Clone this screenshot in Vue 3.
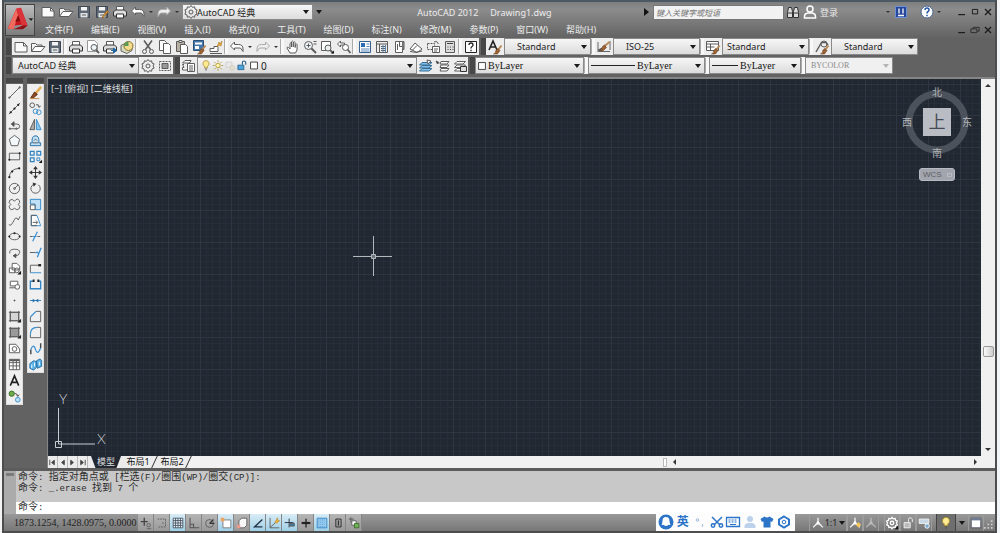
<script setup>
import { ref } from 'vue'

const brush = '<path d="M14.500 6.500l-4 5" stroke="#b98a5a" stroke-width="2"/><path d="M11 9.500l2 2-2.500 3.500H6.500q2.500-1 2.500-4z" fill="#9b6234" stroke="#6f4423" stroke-width=".6"/>'
const page = '<path d="M2 3.500h8.500l3.500 3.500v6H2z" fill="#fafafa"/><path d="M10.500 3.500V7H14"/>'
const disk = '<path d="M2.500 2.500h11v11h-11z" fill="#5d6874" stroke="#3f4852"/><path d="M5 3h6v3.500H5z" fill="#f4f4f4" stroke="none"/><path d="M4.500 9h7v4.500h-7z" fill="#dfe3e6" stroke="none"/><path d="M6 11h4"/>'
const printer = '<path d="M4.500 6V2.500h7V6" fill="#fff"/><path d="M3.500 6h9l2 2v4h-13V8z" fill="#ddd" stroke="#333"/><path d="M4.500 10h7v4h-7z" fill="#fff" stroke="#333"/>'
const person = '<circle cx="8" cy="5" r="3"/><path d="M2.500 14v-1.500q0-3 3.500-3.500h4q3.500.500 3.500 3.500V14z"/>'
const layers = '<path d="M5 3.500h8.500L11 6H2.500zM5 7h8.500L11 9.500H2.500zM5 10.500h8.500L11 13H2.500z" fill="#fff"/>'
const gear = '<path d="M8 1.500l1.400 1.800 2.200-.500.400 2.200 2.100.9-1 2.100 1 2.100-2.100.9-.4 2.200-2.200-.500L8 14.500l-1.400-1.800-2.200.5-.4-2.200-2.100-.9 1-2.100-1-2.100L4 5l.4-2.200 2.200.500z"/><circle cx="8" cy="8" r="2"/>'
const aMark = '<path d="M8 2v5L2.500 13M8 7l5.500 6M5 10.500q3-3 6 0" stroke="#f4f4f4" stroke-width="1.500"/><circle cx="8" cy="7.500" r="1.500" fill="#fff" stroke="none"/>'

const icons = {
  paper: page, disk, printer, gear, layers,
  open: '<path d="M1.500 12.500v-8h4l1.500 1.500h5v2" fill="#f3f3f3"/><path d="M1.500 12.500l3.500-5h10l-4 5z" fill="#fff"/>',
  saveas: disk + '<path d="M14.500 7.500l-5 6-1.500.5.500-1.500 4.500-6z" fill="#e39a3b" stroke="#7a4d18" stroke-width=".6"/>',
  undo: '<path d="M1.500 7l4-4v2.500h4q4.500 0 4.500 4.500v2.500l-2.500-3.500h-6V11z" fill="#fff"/>',
  redo: '<path d="M14.500 7l-4-4v2.500h-4Q2 5.500 2 10v2.500L4.500 9h6v2z" fill="#eee" stroke="#aaa"/>',
  preview: '<path d="M2.500 1.500h7l3 3v8h-10z" fill="#fff" stroke="#999"/><circle cx="9" cy="8.500" r="3" fill="#eef4f8"/><path d="M11 11l3 3" stroke-width="1.800"/>',
  publish: printer + '<path d="M9 11.500h4.500M11.500 9l3 2.500-3 2.500z" stroke="#1b66a5" fill="#1b66a5"/>',
  globe: '<path d="M2 6.500l6-3 5 2v6l-5 3-6-2.500z" fill="#d9dcc0" stroke="#666"/><circle cx="9.500" cy="7" r="4.500" fill="#f1dc8f" stroke="#8c7326"/><path d="M9.500 7V2.500A4.500 4.500 0 0 0 5 7z" fill="#5b9a55" stroke="none"/>',
  cut: '<path d="M4 1.500l6.500 9M12 1.500l-6.500 9" stroke-width="1.600"/><circle cx="4.500" cy="12.500" r="2"/><circle cx="11.500" cy="12.500" r="2"/>',
  copy: '<path d="M2.500 1.500h5l2 2v8h-7z" fill="#fff"/><path d="M6.500 4.500h5l2 2v8h-7z" fill="#fff"/>',
  paste: '<path d="M2.500 2.500h8v10h-8z" fill="#b9b0a4"/><path d="M5 1.500h3v2H5z" fill="#eee"/><path d="M6.500 5.500h5l2 2v7h-7z" fill="#fff"/>',
  match: '<path d="M2.500 1.500h10v10h-10z" fill="#4579ad" stroke="#2b4e73"/><path d="M4 3.500h7v2H4zM4 7h4v3H4z" fill="#fff" stroke="none"/>' + brush,
  block: '<path d="M2 12.500V9.500h4v-2h4v5zM2 14.500h12" fill="#fff"/><path d="M9 8l2-5 1 2 2-3-1 5-2-1z" fill="#f6b53b" stroke="#a3701d" stroke-width=".6"/>',
  hand: '<path d="M5 14L2 9q0-1.500 1.500-.5L5 10V4.500q1-1.500 1.500 0V8 2.800q1-1.500 1.700 0V8l.3-4.600q1-1.300 1.600 0V8.500l.6-3q1-1.200 1.400 0L12 11l-1.500 3z" fill="#fff"/>',
  zoom: '<circle cx="6.500" cy="6.500" r="4" fill="#eef4f8"/><path d="M9.500 9.500l4.500 4.500" stroke-width="2"/><path d="M4.500 6.500h4M6.500 4.500v4M11.500 2.500h3M11.500 5h3"/>',
  zoomwin: '<path d="M2.500 2.500h9v9h-9z" fill="#fff"/><circle cx="9" cy="9" r="3" fill="#e8f0f5"/><path d="M11 11l3 3" stroke-width="1.800"/><path d="M12 14.500h3v-3z" fill="#111" stroke="none"/>',
  zoomprev: '<path d="M1.500 5l3-3v2h4v2h-4v2z" fill="#fff"/><circle cx="9.500" cy="8.500" r="3" fill="#fff"/><path d="M11.500 10.500l3 3.500" stroke-width="1.800"/>',
  props: '<path d="M2.500 2.500h11v11h-11z" fill="#fff" stroke="#36618f"/><path d="M4 4h4v4H4z" fill="#2b6db0" stroke="none"/><path d="M9.500 5h3M9.500 7.500h3M4 10h8.500M4 12h8.500" stroke="#5688b8"/>',
  dcenter: '<path d="M2.500 2.500h11v11h-11zM2.500 5h11M5.500 5v8.500M7 7.500h5M7 9.500h5M7 11.500h5" fill="#eee"/><path d="M9 6v7M11.500 6v7" stroke="#5688b8"/>',
  palette: '<path d="M4.500 2.500h7v11h-7zM8.500 2.500v5h3M6.500 5v6" fill="#fff"/><path d="M11.500 2.500h1.500v8h-1.500" fill="#888"/>',
  sheets: '<path d="M2 10l5-6 7 6-5 3.500zM4 11.500l5-5M2 12.500q6 2 12-.500" fill="#fff"/>',
  markup: '<path d="M2.500 4.500h7v6h-7z" stroke-dasharray="2 1"/><path d="M7.500 7.500h7v6h-7zM9 10h4M9 12h3" fill="#fff"/><path d="M9 3q3-2 4.500 2"/>',
  calc: '<path d="M3.500 2.500h9v11h-9z" fill="#ddd"/><path d="M5 4.500h6M5.500 8h1M8 8h1M10.500 8h1M5.500 10.500h1M8 10.500h1M10.500 10.500h1" stroke="#444"/>',
  help: '<path d="M2.500 2.500h11v11h-11z" fill="#fff" stroke="#222"/><path d="M6 6q0-2 2-2t2 2q0 1-1 1.500T8 9.500M8 10.800v1.400" stroke="#222" stroke-width="1.300"/>',
  textstyle: '<path d="M2 11L6 2l4 9M3.500 8h5" stroke="#222" stroke-width="1.600"/>' + brush,
  dimstyle: '<path d="M2 3v10M14 2v9M2 12.500h12" stroke="#666"/><path d="M2 11l4-2v3z" fill="#666"/><path d="M13.500 3l-5 4" stroke="#b98a5a" stroke-width="2"/><path d="M8.500 6l2 2.500-3 3H3.500q3-1.500 3-4z" fill="#9b6234" stroke="#6f4423" stroke-width=".6"/>',
  tablestyle: '<path d="M1.500 2.500h12v9h-12zM1.500 5h12M5.500 5v6.500M1.500 8h8" fill="#fff"/>' + brush,
  mleader: '<path d="M2 13L7.500 3.500H12L14 6" stroke-width="1.400"/><circle cx="10" cy="5" r="3"/>' + brush,
  wssave: '<path d="M2.500 3.500h11v9h-11z" stroke-dasharray="2 1"/><path d="M5 5.500h6v5H5z" fill="#999"/>',
  layerprop: '<path d="M4 2.500h6L8.500 5H1.500zM3 6.500H1.500L3 9.500M3 9.500H1.500V12H6" fill="#fff"/><path d="M6.500 5.500h7v8h-7zM8 8h4M8 10h4M8 12h4" fill="#fff"/>',
  bulb: '<path d="M8 1.500a4 4 0 0 1 2 7.500v2H6V9a4 4 0 0 1 2-7.500z" fill="#ffeb94" stroke="#a58a2a"/><path d="M6.500 12.500h3M7 14h2" stroke="#555"/>',
  sun: '<circle cx="8" cy="8" r="3" fill="#fff6a8" stroke="#a58a2a"/><path d="M8 1v2.500M8 12.500V15M1 8h2.500M12.500 8H15M3 3l2 2M11 11l2 2M13 3l-2 2M5 11l-2 2" stroke="#a58a2a"/>',
  vpfreeze: '<path d="M2.500 3.500h8v7h-8z" fill="#e8e8e8" stroke="#ccc"/><circle cx="11" cy="11" r="3" fill="#e6e0cf" stroke="#c9c4b5"/>',
  unlock: '<path d="M2.500 7.500h8v6h-8z" fill="#4aa3df" stroke="#22597f"/><path d="M8.500 7V4q0-2 2-2t2.500 2v3" stroke="#22597f" stroke-width="1.400"/>',
  swatch: '<path d="M2.500 2.500h11v11h-11z" fill="#fff" stroke="#222" stroke-width="1.300"/>',
  lay1: '<path d="M4 4.500h10L11 7H1.500zM4 7.500h10L11 10H1.500zM4 10.500h10L11 13H1.500z" fill="#7fbce8" stroke="#3b6f94"/><path d="M9 2l4 1-3 3z" fill="#fff"/>',
  lay2: '<path d="M1 3l3 1.500L2.500 6z" fill="#333"/><path d="M6 3.500h8L12 6H5zM6 7h8l-2 2.500H5zM6 10.500h8L12 13H5z" fill="#fff"/>',
  lay3: layers + '<path d="M8.500 8.500h6v5h-6z" fill="#ddd" stroke="#333"/>',
  line: '<path d="M2.500 13.500L13.500 2.500"/><circle cx="2.500" cy="13.500" r=".8"/><circle cx="13.500" cy="2.500" r=".8"/>',
  xline: '<path d="M2 14L14 2"/><path d="M4 12h0M12 4h0M8 8h0" stroke="#222" stroke-width="2.400" stroke-linecap="round"/>',
  pline: '<path d="M2.500 12.500h8q3 0 3-2.500t-3-2.500H7"/><path d="M7.500 5L4.500 7.500l3 2.500z" fill="#444"/><circle cx="3" cy="12.500" r=".8"/><circle cx="10" cy="12.500" r=".8"/>',
  polygon: '<path d="M8 2.500l5.500 4.200-2 6.800h-7l-2-6.800z" fill="#f2f8fc"/>',
  rect: '<path d="M2.500 4.500h11v7h-11z"/><path d="M2.500 11.500h0M13.500 4.500h0" stroke="#222" stroke-width="2.200" stroke-linecap="round"/>',
  arc: '<path d="M2.500 13.500q0-9 10.500-10"/><path d="M2.500 13h0M5.500 7h0M13 3.500h0" stroke="#222" stroke-width="2.400" stroke-linecap="round"/>',
  circle: '<circle cx="8" cy="8" r="5.500"/><path d="M8 8l4-4" /><circle cx="8" cy="8" r="1"/>',
  cloud: '<path d="M8 4.500q3-4 5-1 1.500 2.500-1 4.500 3 2 1 4.500-2.500 2.500-5-.5-3 3-5 .5-2-3 1-4.500-3-2-1-4.500 2.500-2.500 5 1z"/>',
  spline: '<path d="M2 12.500q2 2 4-2t3-5q2-1 3 2l2-4"/>',
  ellipse: '<ellipse cx="8" cy="8" rx="5.500" ry="3.500"/><path d="M2.500 8h0M8 4.500h0M13.500 8h0" stroke="#222" stroke-width="2.200" stroke-linecap="round"/>',
  earc: '<path d="M3 9Q2 4.500 8 4.500T13.500 8 9 11.500"/><path d="M9.500 9.500l-3 2 3 2z" fill="#444"/>',
  insert: '<path d="M5.500 2.500h5l3 3v4h-8zM2.500 7.500h6v5h-6z" fill="#fff"/><circle cx="10.500" cy="10" r="2.500"/><path d="M11 14.500h4v-4z" fill="#111" stroke="none"/>',
  mkblock: '<path d="M3.500 4.500h8v5h-8zM2.500 11.500h6" fill="#fff"/><circle cx="11" cy="10.500" r="2.500" fill="#fff"/>',
  point: '<path d="M7.500 7.500h1v1h-1z" fill="#333"/>',
  hatch: '<path d="M3.500 3.500h9v9h-9z" fill="#d6d6d6"/><path d="M2 3.500h12M3.500 2v12M12.500 2v12M2 12.500h12"/><path d="M11 14.500h4v-4z" fill="#222" stroke="none"/>',
  gradient: '<path d="M3.500 3.500h9v9h-9z" fill="#999"/><path d="M2 3.500h12M3.500 2v12M12.500 2v12M2 12.500h12"/><path d="M11 14.500h4v-4z" fill="#222" stroke="none"/>',
  region: '<path d="M2.500 12.500v-9h7l4 5v4z" fill="#fff"/><circle cx="8" cy="8.500" r="2.500"/>',
  table: '<path d="M2.500 2.500h11v11h-11zM2.500 6h11M2.500 9.500h11M6.500 4v9.500M10 4v9.500" fill="#fff"/><path d="M3 3.500h10" stroke-width="2"/>',
  mtext: '<path d="M3.500 13.500L8 3l4.500 10.500M5 10h6" stroke="#222" stroke-width="1.700"/>',
  addsel: '<circle cx="5" cy="5" r="2.800" fill="#6dab4b" stroke="#3c6d26"/><circle cx="11.500" cy="11.500" r="2.500" fill="#bfe0f5" stroke="#3a8fd0"/><path d="M8 4.500q3 0 3.500 3M10 6l1.500 2 1.500-2"/>',
  erase: '<path d="M14 2L8 9" stroke="#e2ad4e" stroke-width="2.600"/><path d="M7 7.500l3 2.500-4 3.500H3z" fill="#8c4a22" stroke="#5c2f14"/><path d="M2 14.500h10" stroke="#c58a4a"/>',
  copyobj: '<circle cx="4.500" cy="4.500" r="2.500"/><path d="M8.500 4q3-1 3.500 2M10.500 5l1.500 2 1.500-2"/><circle cx="8" cy="11" r="2.500" stroke="#3a8fd0"/><circle cx="11.500" cy="12" r="2.500" stroke="#3a8fd0"/>',
  mirror: '<path d="M7 2.500v11H2z" fill="#aaa"/><path d="M9 2.500v11h5z" fill="#8cc6ec" stroke="#3a8fd0"/>',
  offset: '<path d="M2.500 13.500h11v-3h-2q1-8-4-7.500-4 .5-3 7.500h-2z" fill="#bfe0f5" stroke="#256fa8"/><path d="M5 10.500h6M6.500 8q1.500-3 3 0"/>',
  array: '<path d="M2.500 2.500h4v4h-4zM9.500 2.500h4v4h-4zM2.500 9.500h4v4h-4z" stroke="#2f84c4" stroke-width="1.300"/><path d="M9.500 9.500h3v3h-3z" stroke="#2f84c4"/><path d="M11.500 15H15v-3.500z" fill="#111" stroke="none"/>',
  move: '<path d="M8 3v10M3 8h10" stroke="#333"/><path d="M8 1l2.500 3.500h-5zM8 15l2.500-3.500h-5zM1 8l3.500-2.500v5zM15 8l-3.500-2.500v5z" fill="#333" stroke="none"/>',
  rotate: '<path d="M6 3.500a5 5 0 1 0 5 .5"/><path d="M5 1.500l4 1.500-3 3z" fill="#333" stroke="none"/>',
  scale: '<path d="M2.500 2.500h11v11h-6v-6h-5z" fill="#bfe0f5" stroke="#2f84c4"/><path d="M2.500 8.500h5v5h-5z" fill="#fff"/>',
  stretch: '<path d="M3.500 2.500h6l4 11h-10z" fill="#fff" stroke="#3a8fd0"/><path d="M9 2.500H3.500v11h6M5 10h5M8.500 8l2 2-2 2"/>',
  trim: '<path d="M2 8h4M10 8h4" stroke-dasharray="3 1"/><path d="M5 13l5-10M5 8h4" stroke="#3a8fd0" stroke-width="1.300"/>',
  extend: '<path d="M2 8h6"/><path d="M8 8h3M10 13l4-10" stroke="#3a8fd0" stroke-width="1.400"/>',
  breakpt: '<path d="M13.500 4.500h-11v8" /><path d="M2.500 12.500H14" stroke="#3a8fd0"/><path d="M11 4.500h3" stroke="#222" stroke-width="2.500"/>',
  breakobj: '<path d="M5.500 4.500h-3v8h11v-8h-3" stroke="#2f84c4" stroke-width="1.400"/><path d="M5 4h2M10 4h2" stroke="#222" stroke-width="2.500"/>',
  join: '<path d="M2 8h12" stroke="#2f84c4"/><path d="M5 6l3 2-3 2zM11 6L8 8l3 2z" fill="#256fa8" stroke="none"/>',
  chamfer: '<path d="M8.500 2.500h5v11h-11v-5"/><path d="M2.500 8.500l6-6" stroke="#3a8fd0" stroke-width="1.300"/>',
  fillet: '<path d="M9.500 2.500h4v11h-11v-3"/><path d="M2.500 10.500q0-8 7-8" stroke="#3a8fd0" stroke-width="1.300"/>',
  blend: '<path d="M3 14v-5M13.500 7.500v-5" stroke="#444" stroke-width="1.500"/><path d="M3 9q3-7 5 0t5.500-1.500" stroke="#3a8fd0" stroke-width="1.300"/>',
  explode: '<path d="M2 7l4-3 3 1v6l-3 3-4-2zM9 4l4-2 1.500 2v6L10 12z" fill="#58b0e4" stroke="#256fa8"/><path d="M4 8v4M7 6v4M12 5v4" stroke="#fff"/>',
  infer: '<path d="M6 2v9M2 6.500h8" stroke="#444" stroke-width="1.500"/><circle cx="11" cy="10.500" r="2"/><path d="M9 14.500h5" />',
  snap: '<path d="M3 3.500h9v9H3" stroke-dasharray="2 1"/><path d="M8 8h2"/>',
  grid: '<path d="M2.500 2.500h11v11h-11zM2.500 5.200h11M2.500 8h11M2.500 10.800h11M5.200 2.500v11M8 2.500v11M10.800 2.500v11" fill="#e4f2fb" stroke="#4b5560"/>',
  ortho: '<path d="M3.500 2v11.500H14M3.500 9.500h4v4" stroke="#555" stroke-width="1.200"/>',
  polar: '<circle cx="7.500" cy="8.500" r="4.500"/><path d="M7.500 8.500L12 4M7.500 8.500H13" stroke="#333" stroke-width="1.300"/>',
  osnap: '<path d="M4.500 4.500h9v9h-9z" fill="#fff" stroke="#777"/><path d="M2 2h4v4H2z" fill="#f0a35a" stroke="none"/>',
  osnap3: '<path d="M4.500 5.500l3-3h6v8l-3 3h-6z" fill="#f8f8f8"/><path d="M2 10h4v4H2z" fill="#e99a8a" stroke="none"/>',
  otrack: '<path d="M13 4L4 12.500h9" stroke="#234" stroke-width="1.500"/>',
  ducs: '<path d="M3.500 2v11.500H14M3.500 13.500l7-7" /><path d="M9 7l3-5 .5 3 2 .5-4 3z" fill="#f0b43a" stroke="#a3701d" stroke-width=".5"/>',
  dyn: '<path d="M7 3v10M2 7.500h10" stroke="#223"/><path d="M8 8.500h5v3H8z" fill="#3a7ca5"/>',
  lwt: '<path d="M8 3v10" stroke="#222" stroke-width="1.500"/><path d="M3 8h10" stroke="#222" stroke-width="2.500"/>',
  tpy: '<path d="M2.500 2.500h11v11h-11z" fill="#9bcdf0" stroke="#2f84c4"/><path d="M4 4.500h8M4 7h8M4 9.500h8M4 12h8" stroke="#4a94cc" stroke-dasharray="1 1"/>',
  qp: '<path d="M5.500 3.500h6v9h-6z" stroke="#222"/><path d="M8.500 5v6" stroke="#333" stroke-width="1.500"/>',
  sc: '<path d="M2 3.500h6M4.500 1.500v6" stroke="#555"/><path d="M5.500 5.500h5v5h-5z" fill="#fff"/><path d="M8.500 8.500h5v5h-5z" fill="#6fb35a" stroke="#3c6d26"/>',
  aMark,
  aVis: aMark + '<path d="M12 7l3 3-3 3-3-3z" fill="#f6c95a" stroke="none"/>',
  aAuto: '<g opacity=".45">' + aMark + '</g>',
  gearL: '<g stroke="#fff" stroke-width="1.500">' + gear + '</g><path d="M11 15h4v-4z" fill="#111" stroke="none"/>',
  lockL: '<path d="M3.500 7.500h7v6h-7z" fill="#bbb" stroke="#f4f4f4"/><path d="M8.500 7V4q0-2 2-2t2.500 2v3" stroke="#f4f4f4"/>',
  hw: '<path d="M2.500 3.500h11v5h-11z" fill="#c8d8e4" stroke="#f4f4f4"/><circle cx="11.500" cy="11.500" r="2.500" fill="#75a9cd" stroke="#fff"/>',
  clean: '<path d="M2.500 2.500h11v11h-11z" fill="#fff" stroke="#445"/><path d="M3 4h10" stroke="#667c96" stroke-width="2"/>',
  binoc: '<path d="M3.500 3.500h3l1 4v6h-5v-5zM12.500 3.500h-3l-1 4v6h5v-5z" fill="#ddd" stroke="#333"/><path d="M3 9h4M9 9h4" stroke="#333"/>',
  userL: '<g fill="#8a8a8a" stroke="#fff" stroke-width="1.500">' + person + '</g>',
  exch: '<path d="M2.500 2.500h11v11h-11z" fill="#26479a" stroke="#6f8fd4"/><path d="M6 4.500v5M10 4.500v5M5 11.500h6" stroke="#fff" stroke-width="1.300"/>',
  helpR: '<circle cx="8" cy="8" r="6" fill="#fff" stroke="#4c6a94"/><path d="M6 6q0-2 2-2t2 2q0 1-1 1.500T8 9.500M8 10.800v1.400" stroke="#2456a0" stroke-width="1.500"/>',
  min: '<path d="M3 11.500h9" stroke="#1c1c1c" stroke-width="1.600"/>',
  max: '<path d="M4.500 4.500h7v6h-7z" stroke="#1c1c1c" stroke-width="1.300"/>',
  restore: '<path d="M5.500 6V4.500h8v5H11M2.500 6.500h8v5h-8z" stroke="#1c1c1c"/>',
  close: '<path d="M4 4l8 8M12 4l-8 8" stroke="#1c1c1c" stroke-width="1.800"/>',
  imeLogo: '<circle cx="8" cy="8" r="7.500" fill="#2b74c8" stroke="none"/><path d="M8 3q3.500 0 3.500 4 0 2 1 3.500-1 .8-2 .3Q9 12 8 12t-2.500-1.200q-1 .5-2-.3 1-1.500 1-3.500 0-4 3.500-4z" fill="#fff" stroke="none"/>',
  imePunct: '<circle cx="5.500" cy="6" r="1.300" stroke="#9bb8d8"/><path d="M10 10l1 1-1 2" stroke="#9bb8d8"/>',
  imeCut: '<g stroke="#2b74c8" stroke-width="1.500"><path d="M3 3l8 8M13 3l-8 8"/><circle cx="4" cy="11.500" r="1.700"/><circle cx="12" cy="11.500" r="1.700"/></g>',
  imeKey: '<path d="M1.500 3.500h13v9h-13z" stroke="#2b74c8" stroke-width="1.300"/><path d="M3.500 6h9M3.500 8h9" stroke="#2b74c8" stroke-dasharray="2 1"/><path d="M5 10.500h6" stroke="#2b74c8"/>',
  imeUser: '<g fill="#bcd2ec" stroke="none">' + person + '</g>',
  imeShirt: '<path d="M5.500 2.500q2.500 2 5 0l4 2.500-1.500 3-1.500-.8v6.300h-7V7.200L3 8 1.500 5z" fill="#2b74c8" stroke="none"/>',
  imeGear: '<path d="M8 2.500l5 3v5l-5 3-5-3v-5z" stroke="#2b74c8" stroke-width="2"/><circle cx="8" cy="8" r="1.800" stroke="#2b74c8"/>',
}

const quick = ['paper', 'open', 'disk', 'saveas', 'printer', 'undo', '▾', 'redo', '▾']
const menus = ['文件(F)', '编辑(E)', '视图(V)', '插入(I)', '格式(O)', '工具(T)', '绘图(D)', '标注(N)', '修改(M)', '参数(P)', '窗口(W)', '帮助(H)']
const standard = ['paper', 'open', 'disk', '|', 'printer', 'preview', 'publish', 'globe', '|', 'cut', 'copy', 'paste', 'match', 'block', '|', 'undo', '▾', 'redo', '▾', '|', 'hand', 'zoom', 'zoomwin', 'zoomprev', '|', 'props', 'dcenter', 'palette', 'sheets', 'markup', 'calc', '|', 'help']
const styles = [
  { icon: 'textstyle', text: 'Standard', label: '文字样式', pad: 'wide' },
  { icon: 'dimstyle', text: 'ISO-25', label: '标注样式', pad: 'wide' },
  { icon: 'tablestyle', text: 'Standard', label: '表格样式', pad: '' },
  { icon: 'mleader', text: 'Standard', label: '多重引线样式', pad: 'wide' },
]
const draw = ['line', 'xline', 'pline', 'polygon', 'rect', 'arc', 'circle', 'cloud', 'spline', 'ellipse', 'earc', 'insert', 'mkblock', 'point', 'hatch', 'gradient', 'region', 'table', 'mtext', 'addsel']
const modify = ['erase', 'copyobj', 'mirror', 'offset', 'array', 'move', 'rotate', 'scale', 'stretch', 'trim', 'extend', 'breakpt', 'breakobj', 'join', 'chamfer', 'fillet', 'blend', 'explode']
const toggles = ['infer', 'snap', 'grid', 'ortho', 'polar', 'osnap', 'osnap3', 'otrack', 'ducs', 'dyn', 'lwt', 'tpy', 'qp', 'sc']
const active = ref(['grid', 'osnap', 'otrack', 'ducs', 'dyn', 'tpy'])
const toggle = (n) => {
  active.value = active.value.includes(n) ? active.value.filter((x) => x !== n) : [...active.value, n]
}
const ime = ['imePunct', 'imeCut', 'imeKey', 'imeUser', 'imeShirt', 'imeGear']
const log = ['命令: 指定对角点或 [栏选(F)/圈围(WP)/圈交(CP)]:', '命令: _.erase 找到 7 个']
const runs = (s) => s.match(/[\u4e00-\u9fff]+|[^\u4e00-\u9fff]+/g).map((t) => ({ t, han: /[\u4e00-\u9fff]/.test(t) }))
const command = ref('')
const query = ref('')
const minor = [6, 13, 19, 25, 38, 44, 51, 57, 70, 76, 82, 89]
const major = [0, 32, 63]
</script>

<template>
  <div class="app">
    <header class="top">
      <button class="logo" aria-label="应用程序菜单">
        <svg viewBox="0 0 30 32">
          <path d="M2 25L11 4l5-1 7 19-5 3-1-4-8 1-1 4z" fill="#c8161d" />
          <path d="M11 4l5-1 7 19-5 3z" fill="#d9343a" />
          <path d="M2 25L11 4l2 7-5 15z" fill="#f06a5e" />
          <path d="M10 18l3-7 2 6z" fill="#7c0c10" />
          <path d="M8 26l10-4 5 0-5 4z" fill="#8e0f14" />
          <path d="M24 14h5l-2 3z" fill="#222" />
        </svg>
      </button>
      <div class="bars">
        <div class="title">
          <template v-for="(n, i) in quick" :key="i">
            <span v-if="n === '▾'" class="drop"></span>
            <button v-else class="tb" :aria-label="n"><svg class="ic" viewBox="0 0 16 16" v-html="icons[n]"></svg></button>
          </template>
          <label class="combo ws1">
            <svg class="ic lead" viewBox="0 0 16 16" v-html="icons.gear"></svg>
            <select aria-label="工作空间"><option>AutoCAD 经典</option></select><i class="arrow"></i>
          </label>
          <i class="arrow bare"></i>
          <h1><span>AutoCAD 2012</span><span>Drawing1.dwg</span></h1>
          <i class="play"></i>
          <input v-model="query" class="search" type="text" placeholder="键入关键字或短语" aria-label="搜索" />
          <div class="account">
            <button class="tb" aria-label="搜索"><svg class="ic" viewBox="0 0 16 16" v-html="icons.binoc"></svg></button>
            <button class="login"><svg class="ic" viewBox="0 0 16 16" v-html="icons.userL"></svg>登录</button>
            <span class="drop push"></span>
            <button class="tb" aria-label="Exchange"><svg class="ic" viewBox="0 0 16 16" v-html="icons.exch"></svg></button>
            <button class="tb q" aria-label="帮助"><svg class="ic" viewBox="0 0 16 16" v-html="icons.helpR"></svg></button>
            <span class="drop"></span>
          </div>
          <div class="win">
            <button v-for="n in ['min', 'max', 'close']" :key="n" :aria-label="n"><svg viewBox="0 0 16 16" v-html="icons[n]"></svg></button>
          </div>
        </div>
        <nav class="menu">
          <button v-for="m in menus" :key="m">{{ m }}</button>
          <div class="win">
            <button v-for="n in ['min', 'restore', 'close']" :key="n" :aria-label="n"><svg viewBox="0 0 16 16" v-html="icons[n]"></svg></button>
          </div>
        </nav>
      </div>
    </header>

    <div class="row">
      <i class="grip"></i>
      <div class="strip">
        <template v-for="(n, i) in standard" :key="i">
          <i v-if="n === '|'" class="sep"></i>
          <span v-else-if="n === '▾'" class="drop dark"></span>
          <button v-else class="tb" :aria-label="n"><svg class="ic" viewBox="0 0 16 16" v-html="icons[n]"></svg></button>
        </template>
      </div>
      <i class="grip"></i>
      <div class="strip">
        <template v-for="s in styles" :key="s.icon">
          <button class="tb pad" :aria-label="s.label"><svg class="ic" viewBox="0 0 16 16" v-html="icons[s.icon]"></svg></button>
          <label class="combo std" :class="s.pad">
            <select :aria-label="s.label"><option>{{ s.text }}</option></select><i class="arrow"></i>
          </label>
          <i v-if="s.icon !== 'mleader'" class="sep"></i>
        </template>
      </div>
    </div>

    <div class="row">
      <i class="grip"></i>
      <div class="strip">
        <label class="combo ws2"><select aria-label="工作空间"><option>AutoCAD 经典</option></select><i class="arrow"></i></label>
        <button class="tb" aria-label="工作空间设置"><svg class="ic" viewBox="0 0 16 16" v-html="icons.gear"></svg></button>
        <button class="tb" aria-label="我的工作空间"><svg class="ic" viewBox="0 0 16 16" v-html="icons.wssave"></svg></button>
      </div>
      <i class="grip"></i>
      <div class="strip">
        <button class="tb" aria-label="图层特性"><svg class="ic" viewBox="0 0 16 16" v-html="icons.layerprop"></svg></button>
        <label class="combo layer">
          <span class="lead states"><svg v-for="n in ['bulb', 'sun', 'vpfreeze', 'unlock', 'swatch']" :key="n" viewBox="0 0 16 16" v-html="icons[n]"></svg></span>
          <select aria-label="图层"><option>0</option></select><i class="arrow"></i>
        </label>
        <button v-for="n in ['lay1', 'lay2', 'lay3']" :key="n" class="tb" :aria-label="n"><svg class="ic" viewBox="0 0 16 16" v-html="icons[n]"></svg></button>
      </div>
      <i class="grip"></i>
      <div class="strip">
        <label class="combo serif color"><svg class="lead box" viewBox="0 0 16 16" v-html="icons.swatch"></svg><select aria-label="颜色"><option>ByLayer</option></select><i class="arrow"></i></label>
        <i class="sep"></i>
        <label class="combo serif ltype"><i class="lead rule"></i><select aria-label="线型"><option>ByLayer</option></select><i class="arrow"></i></label>
        <i class="sep"></i>
        <label class="combo serif lweight"><i class="lead rule short"></i><select aria-label="线宽"><option>ByLayer</option></select><i class="arrow"></i></label>
        <i class="sep"></i>
        <label class="combo serif plot"><select aria-label="打印样式" disabled><option>BYCOLOR</option></select><i class="arrow"></i></label>
      </div>
    </div>

    <main class="work">
      <div v-for="(set, k) in [draw, modify]" :key="k" class="palette">
        <i class="vgrip"></i>
        <div class="tools">
          <button v-for="n in set" :key="n" class="tool" :aria-label="n"><svg class="ic" viewBox="0 0 16 16" v-html="icons[n]"></svg></button>
        </div>
      </div>
      <section class="doc">
        <div class="upper">
          <div class="canvas">
            <svg class="gridlines" width="100%" height="100%">
              <defs>
                <pattern id="grid" x="25" y="68" width="95" height="95" patternUnits="userSpaceOnUse">
                  <g fill="#262e39">
                    <rect v-for="m in minor" :key="'v' + m" :x="m" y="0" width="1" height="95" />
                    <rect v-for="m in minor" :key="'h' + m" x="0" :y="m" width="95" height="1" />
                  </g>
                  <g fill="#2d3641">
                    <rect v-for="m in major" :key="'v' + m" :x="m" y="0" width="1" height="95" />
                    <rect v-for="m in major" :key="'h' + m" x="0" :y="m" width="95" height="1" />
                  </g>
                </pattern>
              </defs>
              <rect width="100%" height="100%" fill="url(#grid)" />
            </svg>
            <p class="vp">[−] [俯视] [二维线框]</p>
            <svg class="cross" viewBox="0 0 40 40">
              <path d="M0 20.500h39M20.500 0v40" stroke="#b3b8bd" />
              <path d="M18.500 18.500h4v4h-4z" fill="#6d737c" stroke="#b3b8bd" />
            </svg>
            <svg class="ucs" viewBox="0 0 60 60">
              <path d="M6.500 17v36H43M3.500 50.500h6v6h-6z" fill="none" stroke="#c9ccd0" />
              <text x="7" y="13">Y</text>
              <text x="45" y="53">X</text>
            </svg>
            <div class="compass">
              <svg viewBox="0 0 72 76"><circle cx="36" cy="38" r="28" fill="none" stroke="#4b525b" stroke-width="7" /></svg>
              <span class="n">北</span><span class="w">西</span><span class="e">东</span><span class="s">南</span>
              <button class="face">上</button>
            </div>
            <button class="wcs">WCS <i></i></button>
          </div>
          <div class="vscroll"><i class="up"></i><i class="thumb"></i><i class="down"></i></div>
        </div>
        <div class="tabs">
          <button v-for="n in ['|◀', '◀', '▶', '▶|']" :key="n" class="nav" :aria-label="n">
            <svg viewBox="0 0 10 10" fill="#444" stroke="#444">
              <path v-if="n.includes('◀')" d="M7 2.500v5L4 5z" /><path v-else d="M3 2.500v5L6 5z" />
              <path v-if="n === '|◀'" d="M2 2v6" /><path v-if="n === '▶|'" d="M8 2v6" />
            </svg>
          </button>
          <button class="tab on">模型</button>
          <button class="tab">布局1</button>
          <button class="tab">布局2</button>
          <div class="hscroll"><i class="thumb"></i><i class="left"></i><i class="right"></i></div>
        </div>
      </section>
    </main>

    <section class="cmd">
      <i class="cgrip"></i>
      <div class="cbody">
        <div class="log">
          <p v-for="l in log" :key="l"><span v-for="(r, i) in runs(l)" :key="i" :class="{ han: r.han }">{{ r.t }}</span></p>
        </div>
        <label class="prompt"><span><span class="han">命令</span>:</span><input v-model="command" type="text" /></label>
      </div>
    </section>

    <footer class="status">
      <span class="coords">1873.1254, 1428.0975, 0.0000</span>
      <button v-for="n in toggles" :key="n" class="tg" :class="{ on: active.includes(n) }" :aria-label="n" :aria-pressed="active.includes(n)" @click="toggle(n)"><svg class="ic" viewBox="0 0 16 16" v-html="icons[n]"></svg></button>
      <div class="ime">
        <svg class="ic" viewBox="0 0 16 16" v-html="icons.imeLogo"></svg>
        <button class="lang">英</button>
        <button v-for="n in ime" :key="n" :aria-label="n"><svg class="ic" viewBox="0 0 16 16" v-html="icons[n]"></svg></button>
      </div>
      <div class="tray">
        <button class="tg scale"><svg class="ic" viewBox="0 0 16 16" v-html="icons.aMark"></svg>1:1<i class="arrow bare"></i></button>
        <button v-for="n in ['aVis', 'aAuto']" :key="n" class="tg" :aria-label="n"><svg class="ic" viewBox="0 0 16 16" v-html="icons[n]"></svg></button>
        <i class="gap"></i>
        <button v-for="n in ['gearL', 'lockL', 'hw']" :key="n" class="tg" :aria-label="n"><svg class="ic" viewBox="0 0 16 16" v-html="icons[n]"></svg></button>
        <i class="gap"></i>
        <button class="tg lit" aria-label="隔离对象"><svg class="ic" viewBox="0 0 16 16" v-html="icons.bulb"></svg></button>
        <i class="arrow bare"></i>
        <button class="tg" aria-label="全屏显示"><svg class="ic" viewBox="0 0 16 16" v-html="icons.clean"></svg></button>
        <svg class="corner" viewBox="0 0 10 10"><path d="M8 0h2v2H8zM4 4h2v2H4zM8 4h2v2H8zM0 8h2v2H0zM4 8h2v2H4zM8 8h2v2H8z" fill="#ccc" /></svg>
      </div>
    </footer>
  </div>
</template>

<style>
body { background: #f2f4f5; }
</style>

<style scoped>
* { box-sizing: border-box; }
.app {
  display: flex;
  flex-direction: column;
  min-height: 100vh;
  margin: 0 3px 0 2px;
  border: solid #4d4d4d;
  border-width: 0 2px 2px 2px;
  background: #626262;
  font-family: "Noto Sans", "Noto Sans CJK SC", sans-serif;
  font-size: 9px;
  color: #222;
}
button, input, select { font: inherit; color: inherit; margin: 0; padding: 0; border: 0; background: none; border-radius: 0; }
button { display: flex; align-items: center; justify-content: center; flex: none; }
.ic { width: 16px; height: 16px; display: block; flex: none; fill: none; stroke: #5c5c5c; }

.top { display: flex; height: 38px; border-top: 2px solid #4b5a65; background: linear-gradient(#7e7e7e, #8c8c8c 20%, #636363); }
.logo { width: 30px; height: 32px; margin: 2px 0 0 1px; border: 1px solid #444; background: linear-gradient(#bdbdbd, #7d7d7d); }
.logo svg { width: 30px; height: 30px; }
.bars { flex: 1; min-width: 0; display: flex; flex-direction: column; }
.title { display: flex; align-items: center; height: 20px; padding-left: 4px; }
.title > .tb { width: 18px; }
.tb { width: 17px; height: 16px; }
.drop { width: 8px; display: flex; justify-content: center; }
.drop::after { content: ""; border: 2px solid transparent; border-top-color: #333; border-bottom: 0; }
.drop.dark { width: 9px; }
.arrow { flex: none; border: 3px solid transparent; border-top: 4px solid #1a1a1a; border-bottom: 0; }
.arrow.bare { margin: 0 3px; }

.combo { position: relative; display: flex; align-items: center; height: 17px; border: 1px solid #8a8a8a; background: linear-gradient(#f6f6f6, #dcdcdc); }
.combo select { appearance: none; width: 100%; height: 100%; padding-left: 5px; outline: 0; opacity: 1; }
.combo .arrow { position: absolute; right: 3px; pointer-events: none; }
.combo .lead { position: absolute; left: 0; pointer-events: none; }
.ws1 { width: 131px; height: 16px; margin-left: 1px; }
.ws1 select { padding-left: 14px; }
.ws2 { width: 127px; }
.std { width: 87px; }
.std select { padding-left: 4px; }
.std.wide select { padding-left: 12px; }
.layer { width: 220px; }
.layer select { padding-left: 63px; font-size: 10px; }
.states { display: flex; margin-left: 2px; }
.states svg { width: 12px; height: 13px; fill: none; }
.states svg:last-child { width: 10px; margin-left: 1px; }
.serif { font-family: "Liberation Serif", serif; font-size: 10px; color: #111; }
.color { width: 109px; }
.color select { padding-left: 12px; }
.combo .box { width: 10px; height: 10px; left: 1px; }
.ltype { width: 117px; }
.ltype select { padding-left: 48px; }
.rule { width: 44px; height: 1px; margin-left: 2px; background: #222; }
.rule.short { width: 26px; }
.lweight { width: 92px; }
.lweight select { padding-left: 30px; }
.plot { width: 88px; background: #f0f0f0; color: #8a8a8a; font-size: 8px; }
.plot .arrow { border-top-color: #b5b5b5; }

h1 { flex: 1; display: flex; justify-content: center; gap: 12px; margin: 0; font-size: 9px; font-weight: 400; color: #ededed; white-space: nowrap; }
.play { border: 4px solid transparent; border-left: 5px solid #111; border-right: 0; margin-right: 4px; }
.search { width: 131px; height: 15px; padding-left: 2px; border: 1px solid #777; background: #f2f2f2; font-size: 8px; font-style: italic; }
.search::placeholder { color: #777; }
.account { display: flex; align-items: center; width: 159px; }
.login { gap: 2px; padding-left: 1px; color: #e8e8e8; }
.push { margin-left: auto; }
.q { margin-left: 9px; }
.win { display: flex; margin-left: auto; padding-right: 1px; }
.win button { width: 13px; height: 13px; }
.win svg { width: 12px; height: 12px; fill: none; }
.title .win { margin-left: 12px; }
.menu { display: flex; align-items: center; height: 15px; padding-left: 10px; gap: 18px; color: #ececec; }

.row { display: flex; height: 17px; margin-bottom: 2px; }
.row + .row { margin-bottom: 3px; }
.grip { width: 7px; margin-right: 1px; background: #474747; border-left: 2px solid #626262; }
.strip { display: flex; align-items: center; background: #ededed; }
.strip + .grip { margin-right: 0; }
.sep { flex: none; width: 4px; height: 15px; border-left: 1px solid #aaa; background: #f8f8f8; }
.pad { width: 18px; }

.work { flex: 1; display: flex; align-items: flex-start; padding-left: 2px; }
.palette { width: 17px; margin-right: 4px; }
.vgrip { display: block; height: 5px; margin: 1px 0; background: #474747; }
.tools { background: #efefef; border: 1px solid #ddd; border-width: 0 1px 1px; }
.tool { width: 100%; height: 16px; }
.tool .ic { width: 15px; height: 15px; }
.doc { flex: 1; min-width: 0; align-self: stretch; display: flex; flex-direction: column; border: 2px solid #858585; border-width: 2px 0 0 1px; margin-left: -1px; }
.upper { flex: 1; display: flex; }
.canvas { position: relative; flex: 1; overflow: hidden; background: #212832; }
.gridlines { position: absolute; inset: 0; }
.vp { position: absolute; left: 3px; top: 3px; margin: 0; color: #dcdcdc; line-height: 13px; }
.cross { position: absolute; left: 305px; top: 157px; width: 40px; height: 40px; }
.ucs { position: absolute; left: 4px; bottom: 5px; width: 60px; height: 60px; }
.ucs text { font: 300 14px Lato, sans-serif; fill: #c9ccd0; }
.compass { position: absolute; right: 8px; top: 5px; width: 72px; height: 76px; color: #b3b5b7; font-size: 10px; line-height: 12px; }
.compass svg { position: absolute; inset: 0; }
.compass span { position: absolute; }
.n { left: 31px; top: 2px; }
.s { left: 31px; bottom: 1px; }
.w { left: 1px; top: 32px; }
.e { right: 1px; top: 32px; }
.face { position: absolute; left: 22px; top: 24px; width: 28px; height: 28px; background: #b9bcc3; color: #444a55; font-size: 17px; line-height: 20px; }
.wcs { position: absolute; right: 26px; top: 89px; width: 36px; height: 13px; justify-content: flex-start; padding-left: 3px; gap: 5px; border: 1px solid #b8bac2; border-radius: 3px; background: #a2a5ad; color: #5c6068; font: 8px "Liberation Sans", sans-serif; }
.wcs i { width: 5px; height: 4px; border: 1px solid #b8bbc4; }
.vscroll { width: 14px; display: flex; flex-direction: column; align-items: center; background: #f0f0f0; padding: 5px 0; }
.up { border: 3px solid transparent; border-bottom-color: #333; border-top: 0; }
.down { border: 3px solid transparent; border-top-color: #333; border-bottom: 0; }
.vscroll .thumb { width: 11px; height: 11px; margin: 259px 0 auto; border: 1px solid #999; border-radius: 2px; background: linear-gradient(90deg, #fafafa, #ccc); }
.tabs { display: flex; height: 12px; background: #ececec; }
.nav { width: 10px; border-right: 1px solid #bbb; }
.nav svg { width: 9px; height: 9px; stroke-width: 1; }
.tab { position: relative; width: 34px; line-height: 12px; color: #111; }
.tab.on { width: 30px; margin-left: 3px; background: #212832; color: #ddd; clip-path: polygon(0 0, 100% 0, 85% 100%, 15% 100%); }
.tab:not(.on)::after { content: ""; position: absolute; right: 0; top: 0; height: 12px; border-right: 1px solid #333; transform: skewX(-25deg); }
.hscroll { flex: 1; display: flex; align-items: center; padding: 0 4px 0 474px; background: #f1f1f1; }
.hscroll .thumb { width: 4px; height: 9px; border: 1px solid #bbb; background: #fff; }
.left { margin-left: 6px; border: 3px solid transparent; border-right-color: #333; border-left: 0; }
.right { margin: 0 14px 0 auto; border: 3px solid transparent; border-left-color: #333; border-right: 0; }

.cmd { display: flex; border-top: 3px solid #5c5c5c; height: 46px; }
.cgrip { width: 12px; background: #ababab; }
.cgrip::before { content: ""; display: block; height: 3px; margin: 2px 2px 0; background: #7b7b7b; }
.cbody { flex: 1; display: flex; flex-direction: column; font-family: "Liberation Mono", "Noto Sans CJK SC", monospace; line-height: 11px; color: #2c2c2c; }
.log { flex: 1; padding: 1px 2px; background: #c8c8c8; }
.log p { margin: 0; height: 11px; white-space: pre; }
.han { font-size: 10px; }
.prompt { display: flex; align-items: center; height: 12px; padding-left: 2px; background: #fff; }
.prompt input { flex: 1; outline: 0; height: 12px; }

.status { display: flex; align-items: stretch; height: 17px; background: linear-gradient(#999, #777); }
.coords { width: 134px; padding-left: 10px; line-height: 17px; font-family: "Liberation Serif", serif; font-size: 10px; white-space: nowrap; }
.tg { width: 16px; border-right: 1px solid #858585; background: linear-gradient(#b5b5b5, #999); overflow: hidden; }
.tg .ic { width: 14px; height: 14px; }
.tg.on { background: linear-gradient(#d8ecf6, #9fcfe6); }
.ime { display: flex; align-items: center; justify-content: space-between; width: 139px; height: 19px; margin: -2px 14px 0 auto; padding: 0 3px 0 2px; background: #fdfdfd; }
.ime button { width: 16px; }
.ime .lang { color: #2b74c8; font-size: 12px; font-weight: 700; line-height: 16px; }
.tray { display: flex; align-items: center; width: 186px; }
.tray .tg { height: 17px; background: none; border: 1px solid #9c9c9c; border-width: 0 1px; }
.tray .scale { width: 38px; }
.tray .scale .arrow { margin: 0 0 0 2px; }
.tray .gap { width: 5px; }
.tray .lit { width: 20px; background: #6e6e6e; border-color: #444; }
.corner { width: 9px; height: 9px; margin: 4px 2px 0 auto; }
</style>
